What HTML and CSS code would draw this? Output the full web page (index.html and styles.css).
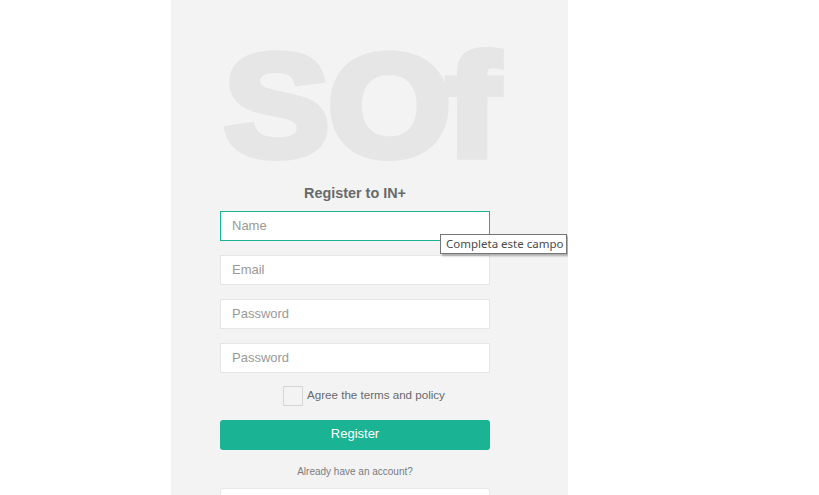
FILE: index.html
```html
<!DOCTYPE html>
<html>
<head>
<meta charset="utf-8">
<link rel="stylesheet" href="styles.css">
</head>
<body>
<div class="panel">
  <div class="box">
    <div class="logo"><span class="l-s">S</span><span class="l-o">O</span>f</div>
    <h3 class="title">Register to IN+</h3>
    <form class="form">
      <div class="field focused"><span class="ph">Name</span></div>
      <div class="field"><span class="ph">Email</span></div>
      <div class="field"><span class="ph">Password</span></div>
      <div class="field"><span class="ph">Password</span></div>
      <div class="agree"><span class="check"></span><span class="agree-text">Agree the terms and policy</span></div>
      <div class="btn-primary">Register</div>
      <p class="small">Already have an account?</p>
      <div class="btn-white"></div>
    </form>
  </div>
  <div class="tooltip">Completa este campo</div>
</div>
</body>
</html>
```

FILE: styles.css
```css
html, body {
  margin: 0;
  padding: 0;
  background: #ffffff;
  height: 100%;
  overflow: hidden;
}
body {
  font-family: "Liberation Sans", Arial, sans-serif;
  color: #676a6c;
}
.panel {
  position: relative;
  margin-left: 171px;
  width: 397px;
  height: 495px;
  overflow: hidden;
  background: #f3f3f4;
  padding-left: 49px;
  box-sizing: border-box;
}
.box {
  width: 270px;
  display: flex;
  flex-direction: column;
}
.logo {
  margin: 48px 0 0 4px;
  height: 115px;
  line-height: 116px;
  font-family: "Liberation Sans", Arial, sans-serif;
  font-size: 145px;
  font-weight: 700;
  color: #e6e6e6;
  -webkit-text-stroke: 8px #e6e6e6;
  white-space: nowrap;
  transform: scaleX(1.09);
  transform-origin: left center;
}
.l-s {
  letter-spacing: -1.3px;
}
.l-o {
  letter-spacing: -4px;
}
.title {
  margin: 21px 0 0;
  font-size: 14.4px;
  line-height: 18px;
  font-weight: bold;
  text-align: center;
  color: #676a6c;
}
.form {
  margin: 9px 0 0;
  display: flex;
  flex-direction: column;
}
.field {
  height: 30px;
  box-sizing: border-box;
  border: 1px solid #e5e6e7;
  background: #ffffff;
  padding-left: 11px;
  padding-bottom: 2px;
  display: flex;
  align-items: center;
  margin-bottom: 14px;
}
.field.focused {
  border-color: #1ab394;
}
.ph {
  font-size: 13px;
  color: #999999;
}
.agree {
  display: flex;
  align-items: center;
  padding-left: 63px;
  height: 20px;
  margin-top: -1px;
}
.check {
  width: 18px;
  height: 18px;
  border: 1px solid #d6d6d6;
  background: #f3f3f4;
  margin-right: 4px;
}
.agree-text {
  font-size: 11.6px;
  padding-bottom: 3px;
  color: #676a6c;
}
.btn-primary {
  margin-top: 14px;
  height: 30px;
  padding-bottom: 3px;
  box-sizing: border-box;
  border-radius: 3px;
  background: #1ab394;
  color: #ffffff;
  font-size: 13px;
  display: flex;
  align-items: center;
  justify-content: center;
}
.small {
  margin: 15px 0 0;
  font-size: 10px;
  line-height: 14px;
  text-align: center;
  color: #7a7c7e;
}
.btn-white {
  margin-top: 9px;
  height: 30px;
  border: 1px solid #e7eaec;
  border-radius: 3px;
  background: #ffffff;
}
.tooltip {
  position: absolute;
  left: 269px;
  top: 234px;
  width: 127px;
  height: 20px;
  box-sizing: border-box;
  border: 1px solid #767676;
  background: #ffffff;
  font-family: "Noto Sans", "DejaVu Sans", sans-serif;
  font-size: 11.5px;
  line-height: 18px;
  padding-left: 5px;
  color: #4a4a4a;
  white-space: nowrap;
  box-shadow: 2px 2px 2px rgba(0, 0, 0, 0.3);
}
```
